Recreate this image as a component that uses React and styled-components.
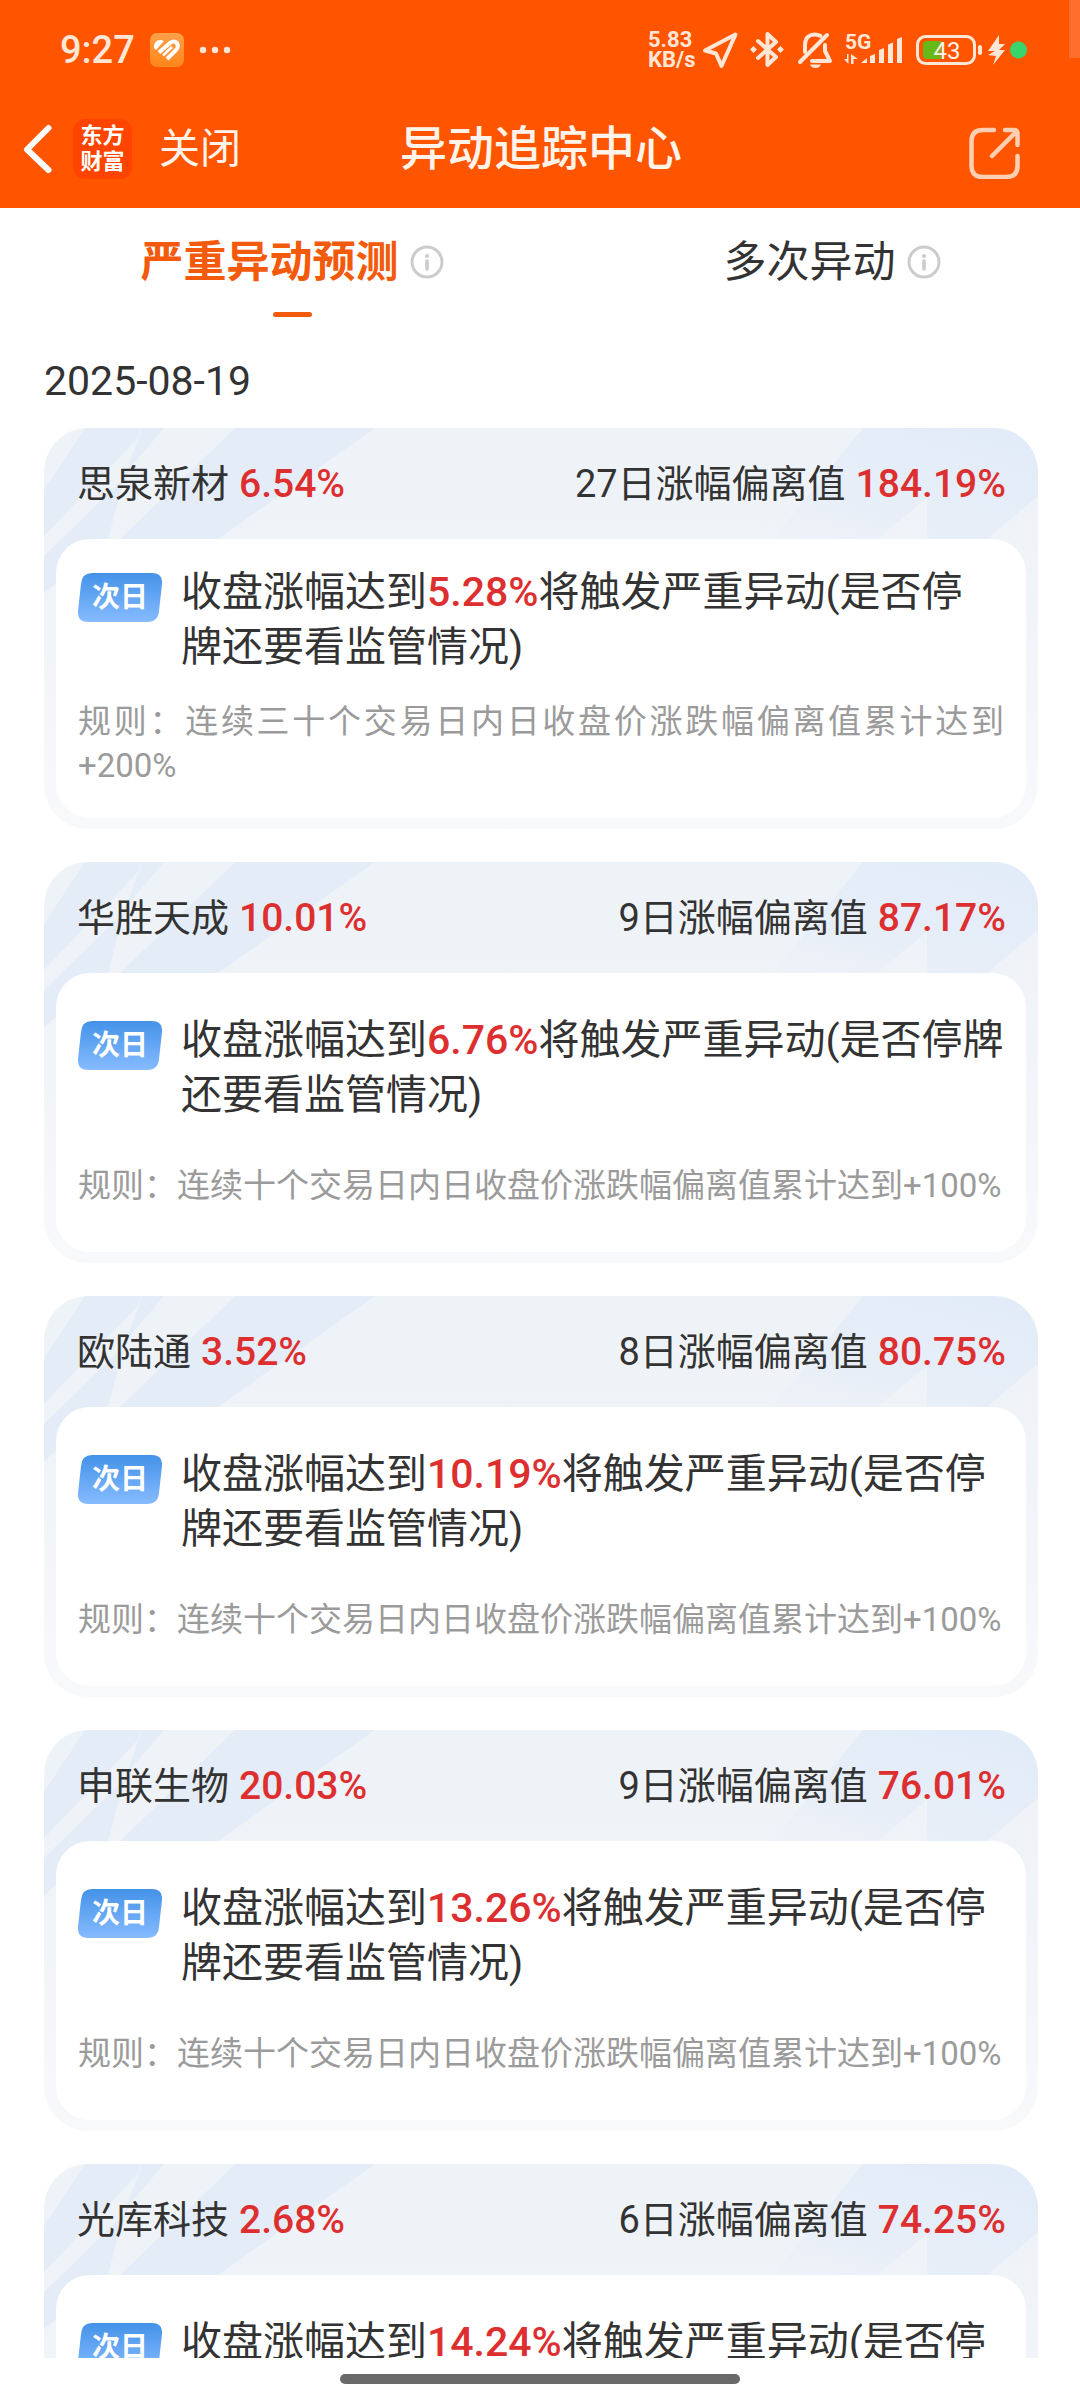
import React, { useState } from "react";
import styled, { createGlobalStyle } from "styled-components";

const GlobalStyle = createGlobalStyle`
  * {
    box-sizing: border-box;
  }

  body {
    margin: 0;
    background: #ffffff;
    color: #333333;
    font-family: Roboto, "Noto Sans CJK SC", sans-serif;
  }

  button {
    padding: 0;
    border: 0;
    background: none;
    color: inherit;
    font: inherit;
    cursor: pointer;
  }

  svg {
    display: block;
    flex: none;
  }
`;

const Page = styled.div`
  height: 100vh;
  display: flex;
  flex-direction: column;
  overflow: hidden;
`;

const Header = styled.header`
  flex: none;
  position: relative;
  background: #ff5500;
  color: #fff3ea;
`;

const EdgeHandle = styled.div`
  position: absolute;
  top: 0;
  right: 0;
  width: 11px;
  height: 58px;
  background: #ff6e2a;
`;

const StatusBar = styled.div`
  height: 100px;
  padding: 0 53px 0 60px;
  display: flex;
  align-items: center;
  justify-content: space-between;
  color: #ffe6d6;
`;

const StatusGroup = styled.div`
  display: flex;
  align-items: center;
`;

const Clock = styled.span`
  width: 90px;
  font-size: 38px;
  font-weight: 500;
  line-height: 40px;
`;

const NetSpeed = styled.div`
  width: 48px;
  font-size: 22px;
  font-weight: 700;
  line-height: 20px;
`;

const NavBar = styled.nav`
  height: 108px;
  padding: 0 56px 10px 20px;
  display: grid;
  grid-template-columns: 1fr auto 1fr;
  align-items: center;
`;

const NavLeft = styled.div`
  display: flex;
  align-items: center;
`;

const BackButton = styled.button`
  width: 53px;
`;

const AppLogo = styled.a`
  width: 59px;
  height: 60px;
  border-radius: 12px;
  background: #ff4400;
  color: #ffffff;
  font-size: 22px;
  font-weight: 700;
  line-height: 26px;
  text-align: center;
  text-decoration: none;
  display: flex;
  flex-direction: column;
  justify-content: center;
`;

const CloseButton = styled.button`
  margin-left: 27px;
  font-size: 41px;
  line-height: 60px;
`;

const NavTitle = styled.h1`
  margin: 0;
  padding-left: 38px;
  font-size: 47px;
  font-weight: 500;
  line-height: 60px;
`;

const ShareButton = styled.button`
  justify-self: end;
`;

const Tabs = styled.div`
  flex: none;
  display: flex;
`;

const Tab = styled.div`
  flex: 1;
  height: 112px;
  padding: 25px 0 0 44px;
  display: flex;
  flex-direction: column;
  align-items: center;
  gap: 21px;
`;

const TabRow = styled.div`
  display: flex;
  align-items: center;
  gap: 11px;
`;

const TabButton = styled.button`
  color: ${props => (props.$active ? "#f45a0c" : "#333333")};
  font-size: 43px;
  font-weight: ${props => (props.$active ? 700 : 400)};
  line-height: 58px;
`;

const TabLine = styled.span`
  width: 39px;
  height: 5px;
  border-radius: 3px;
  background: #f45a0c;
`;

const Content = styled.main`
  flex: 1;
  min-height: 0;
  overflow: hidden;
  padding: 0 42px 0 44px;
`;

const DateLabel = styled.h2`
  margin: 0;
  height: 108px;
  padding-top: 36px;
  font-size: 41px;
  font-weight: 400;
  line-height: 50px;
`;

const CardList = styled.div`
  display: flex;
  flex-direction: column;
  gap: 33px;
`;

const Card = styled.article`
  position: relative;
  overflow: hidden;
  padding: 0 12px 11px;
  border-radius: 44px;
  background: linear-gradient(#eef3f8 0, #f0f3f8 40%, #f8f9fb 100%);
`;

const Streaks = styled.svg`
  position: absolute;
  top: 0;
  ${props => (props.$side === "right" ? "right: 0;" : "left: 0;")}
`;

const CardHeader = styled.div`
  position: relative;
  height: 111px;
  padding: 0 20px 0 21px;
  display: flex;
  align-items: center;
  justify-content: space-between;
  font-size: 38px;
  line-height: 50px;
`;

const Summary = styled.div`
  display: flex;
  align-items: center;
  gap: 10px;
`;

const Rate = styled.span`
  color: #dd2f30;
  font-size: ${props => (props.$small ? "39px" : "41px")};
  font-weight: 500;
`;

const CardBody = styled.div`
  position: relative;
  min-height: 279px;
  padding: 0 22px 4px;
  border-radius: 34px;
  background: #ffffff;
  display: flex;
  flex-direction: column;
  justify-content: space-evenly;
`;

const Forecast = styled.div`
  display: flex;
  align-items: flex-start;
`;

const Badge = styled.div`
  position: relative;
  flex: none;
  width: 84px;
  height: 49px;
  margin: 8px 19px 0 0;
  color: #ffffff;
  font-size: 28px;
  font-weight: 700;
  line-height: 50px;
  text-align: center;
`;

const BadgeShape = styled.svg`
  position: absolute;
  top: 0;
  left: 0;
`;

const BadgeText = styled.span`
  position: relative;
`;

const ForecastText = styled.p`
  margin: 0;
  font-size: 41px;
  line-height: 55px;
  white-space: nowrap;
`;

const ForecastLine = styled.span`
  display: block;
`;

const Rule = styled.p`
  margin: 0;
  color: #9b9b9b;
  font-size: 33px;
  line-height: 44px;
  text-align: justify;
`;

const HomeArea = styled.footer`
  flex: none;
  height: 42px;
  padding-top: 16px;
  display: flex;
  justify-content: center;
`;

const HomeBar = styled.div`
  width: 37%;
  height: 10px;
  border-radius: 5px;
  background: #696969;
`;

const RULE_10 = "规则：连续十个交易日内日收盘价涨跌幅偏离值累计达到+100%";
const RULE_30 = "规则：连续三十个交易日内日收盘价涨跌幅偏离值累计达到+200%";

const stocks = [
  { name: "思泉新材", change: "6.54%", days: 27, deviation: "184.19%", trigger: "5.28%", tail: ["将触发严重异动(是否停", "牌还要看监管情况)"], rule: RULE_30 },
  { name: "华胜天成", change: "10.01%", days: 9, deviation: "87.17%", trigger: "6.76%", tail: ["将触发严重异动(是否停牌", "还要看监管情况)"], rule: RULE_10 },
  { name: "欧陆通", change: "3.52%", days: 8, deviation: "80.75%", trigger: "10.19%", tail: ["将触发严重异动(是否停", "牌还要看监管情况)"], rule: RULE_10 },
  { name: "申联生物", change: "20.03%", days: 9, deviation: "76.01%", trigger: "13.26%", tail: ["将触发严重异动(是否停", "牌还要看监管情况)"], rule: RULE_10 },
  { name: "光库科技", change: "2.68%", days: 6, deviation: "74.25%", trigger: "14.24%", tail: ["将触发严重异动(是否停", "牌还要看监管情况)"], rule: RULE_10 }
];

const HeartAppIcon = () => (
  <svg width="34" height="34" viewBox="0 0 34 34">
    <defs>
      <linearGradient id="heartBg" x1="0" y1="0" x2="0" y2="1">
        <stop offset="0" stopColor="#ffa04a" />
        <stop offset="1" stopColor="#ff8618" />
      </linearGradient>
    </defs>
    <rect width="34" height="34" rx="7" fill="url(#heartBg)" />
    <path d="M4 15C3 9 9 5 14 8L6 17Z" fill="#fff" />
    <path d="M9 19.500L20 10Q24 7 27 10Q29 14 26 17L17 26" fill="none" stroke="#fff" strokeWidth="4" />
    <path d="M13 22.500L22 14" fill="none" stroke="#fff" strokeWidth="2.500" />
  </svg>
);

const MoreDots = () => (
  <svg width="54" height="34" viewBox="0 0 54 34" fill="currentColor">
    <circle cx="19" cy="17" r="3.200" />
    <circle cx="31" cy="17" r="3.200" />
    <circle cx="43" cy="17" r="3.200" />
  </svg>
);

const LocationIcon = () => (
  <svg width="48" height="40" viewBox="0 0 48 40" fill="none" stroke="currentColor" strokeWidth="4" strokeLinejoin="round">
    <path d="M39.500 4.500L9 20.500L20 23.500L25.500 36Z" />
  </svg>
);

const BluetoothIcon = () => (
  <svg width="48" height="40" viewBox="0 0 48 40" fill="none" stroke="currentColor" strokeWidth="4" strokeLinejoin="round" strokeLinecap="round">
    <path d="M14 11L32 27L23.500 35V4L32 12L14 28" />
    <path d="M9.500 16L13 19.500L9.500 23L6 19.500ZM36.500 16L40 19.500L36.500 23L33 19.500Z" fill="currentColor" stroke="none" />
  </svg>
);

const BellOffIcon = () => (
  <svg width="48" height="40" viewBox="0 0 48 40" fill="none" stroke="currentColor" strokeWidth="4" strokeLinejoin="round" strokeLinecap="round">
    <path d="M8 32L35 5" />
    <path d="M13 22V15C13 7 18 4.500 22.500 4.500Q26 4.500 28.500 6" />
    <path d="M33 15V21L38 31H20" />
    <path d="M18 34.500H29Q27.500 38 23.500 38Q19.500 38 18 34.500Z" fill="currentColor" stroke="none" />
  </svg>
);

const SignalIcon = () => (
  <svg width="72" height="40" viewBox="0 0 72 40" fill="currentColor">
    <text x="5" y="18.500" fontSize="21" fontWeight="700">5G</text>
    <path d="M8.500 24V34L4 29H7V24ZM11 34V24L18 29H13.500V34Z" />
    <path d="M21 33L27 28V33ZM30 26L35 24V33H30ZM39 20L44 18V33H39ZM48 14.500L53 12.500V33H48ZM57 9L62 7V33H57Z" />
  </svg>
);

const BatteryIcon = () => (
  <svg width="74" height="40" viewBox="0 0 74 40">
    <rect x="5.500" y="6.500" width="57" height="27" rx="8" fill="none" stroke="#ffe6d6" strokeWidth="3" />
    <path d="M15 11H29V29H15Q11 29 11 25V15Q11 11 15 11Z" fill="#66b916" />
    <rect x="66" y="15" width="4" height="10" rx="2" fill="#ffe6d6" />
    <text x="35" y="29" fontSize="24" textAnchor="middle" fill="#fff3ea">43</text>
  </svg>
);

const BoltIcon = () => (
  <svg width="24" height="40" viewBox="0 0 24 40" fill="currentColor">
    <path d="M13 5L2 21H9L2 25L10 26L7 35L19 20H13L19 14H13Z" />
  </svg>
);

const RecordDot = () => (
  <svg width="17" height="40" viewBox="0 0 17 40">
    <circle cx="8.500" cy="20" r="8.500" fill="#37d56c" />
  </svg>
);

const InfoIcon = () => (
  <svg width="34" height="34" viewBox="0 0 34 34" fill="none" stroke="#cccccc">
    <circle cx="17" cy="17" r="15" strokeWidth="3" />
    <circle cx="17" cy="11" r="2" fill="#cccccc" stroke="none" />
    <path d="M17 16V24" strokeWidth="3.600" strokeLinecap="round" />
  </svg>
);

const CardStreaks = () => (
  <>
    <Streaks $side="left" aria-hidden="true" width="332" height="170" viewBox="0 0 332 170" fill="#e4edf7">
      <path d="M41 0H97L94 10L0 108V62Z" />
      <path d="M98 0H120L86 40L76 66L64 111L0 165V128L80 50Z" />
      <path d="M191 0H331L174 111H76Z" />
    </Streaks>
    <Streaks $side="right" aria-hidden="true" width="310" height="120" viewBox="0 0 310 120">
      <defs>
        <linearGradient id="streakRight" x1="0" y1="1" x2="0.700" y2="0">
          <stop offset="0" stopColor="#eff3f8" />
          <stop offset="0.400" stopColor="#e7eef8" />
          <stop offset="1" stopColor="#e2ecf8" />
        </linearGradient>
      </defs>
      <path d="M135 0H310V68L259 111H199V70L149 111H45Z" fill="url(#streakRight)" />
    </Streaks>
  </>
);

const StockCard = ({ name, change, days, deviation, trigger, tail, rule }) => (
  <Card>
    <CardStreaks />
    <CardHeader>
      <Summary>
        <span>{name}</span>
        <Rate $small>{change}</Rate>
      </Summary>
      <Summary>
        <span>{days}日涨幅偏离值</span>
        <Rate $small>{deviation}</Rate>
      </Summary>
    </CardHeader>
    <CardBody>
      <Forecast>
        <Badge>
          <BadgeShape width="84" height="49" viewBox="0 0 84 49">
            <defs>
              <linearGradient id="badgeBg" x1="0" y1="0" x2="0" y2="1">
                <stop offset="0" stopColor="#4492e8" />
                <stop offset="1" stopColor="#86bbff" />
              </linearGradient>
            </defs>
            <path d="M14 0H74Q85 0 84 11L81 38Q80 49 69 49H10Q-1 49 0 38L3 11Q4 0 14 0Z" fill="url(#badgeBg)" />
          </BadgeShape>
          <BadgeText>次日</BadgeText>
        </Badge>
        <ForecastText>
          <ForecastLine>
            收盘涨幅达到<Rate>{trigger}</Rate>
            {tail[0]}
          </ForecastLine>
          <ForecastLine>{tail[1]}</ForecastLine>
        </ForecastText>
      </Forecast>
      <Rule>{rule}</Rule>
    </CardBody>
  </Card>
);

const tabs = ["严重异动预测", "多次异动"];

const App = () => {
  const [active, setActive] = useState(0);

  return (
    <Page>
      <GlobalStyle />
      <Header>
        <EdgeHandle />
        <StatusBar>
          <StatusGroup>
            <Clock>9:27</Clock>
            <HeartAppIcon />
            <MoreDots />
          </StatusGroup>
          <StatusGroup>
            <NetSpeed>
              <div>5.83</div>
              <div>KB/s</div>
            </NetSpeed>
            <LocationIcon />
            <BluetoothIcon />
            <BellOffIcon />
            <SignalIcon />
            <BatteryIcon />
            <BoltIcon />
            <RecordDot />
          </StatusGroup>
        </StatusBar>
        <NavBar>
          <NavLeft>
            <BackButton aria-label="返回">
              <svg width="36" height="52" viewBox="0 0 36 52" fill="none" stroke="#ffffff" strokeWidth="6" strokeLinecap="round" strokeLinejoin="round">
                <path d="M28.500 5L7 26.500L28.500 47" />
              </svg>
            </BackButton>
            <AppLogo href="#">
              <span>东方</span>
              <span>财富</span>
            </AppLogo>
            <CloseButton>关闭</CloseButton>
          </NavLeft>
          <NavTitle>异动追踪中心</NavTitle>
          <ShareButton aria-label="分享">
            <svg width="56" height="60" viewBox="0 0 56 60" fill="none" stroke="#ffcfb3" strokeWidth="4.500" strokeLinecap="round" strokeLinejoin="round">
              <path d="M26 11H15Q3.500 11 3.500 22V47Q3.500 58 15 58H38Q49.500 58 49.500 47V37" />
              <path d="M37 11H46Q49.500 11 49.500 15V26M48 13L24 37" />
            </svg>
          </ShareButton>
        </NavBar>
      </Header>
      <Tabs role="tablist">
        {tabs.map((label, index) => (
          <Tab key={label}>
            <TabRow>
              <TabButton role="tab" aria-selected={active === index} $active={active === index} onClick={() => setActive(index)}>
                {label}
              </TabButton>
              <button aria-label={`${label}说明`}>
                <InfoIcon />
              </button>
            </TabRow>
            {active === index && <TabLine />}
          </Tab>
        ))}
      </Tabs>
      <Content>
        <DateLabel>2025-08-19</DateLabel>
        <CardList>
          {stocks.map(stock => (
            <StockCard key={stock.name} {...stock} />
          ))}
        </CardList>
      </Content>
      <HomeArea>
        <HomeBar />
      </HomeArea>
    </Page>
  );
};

export default App;
